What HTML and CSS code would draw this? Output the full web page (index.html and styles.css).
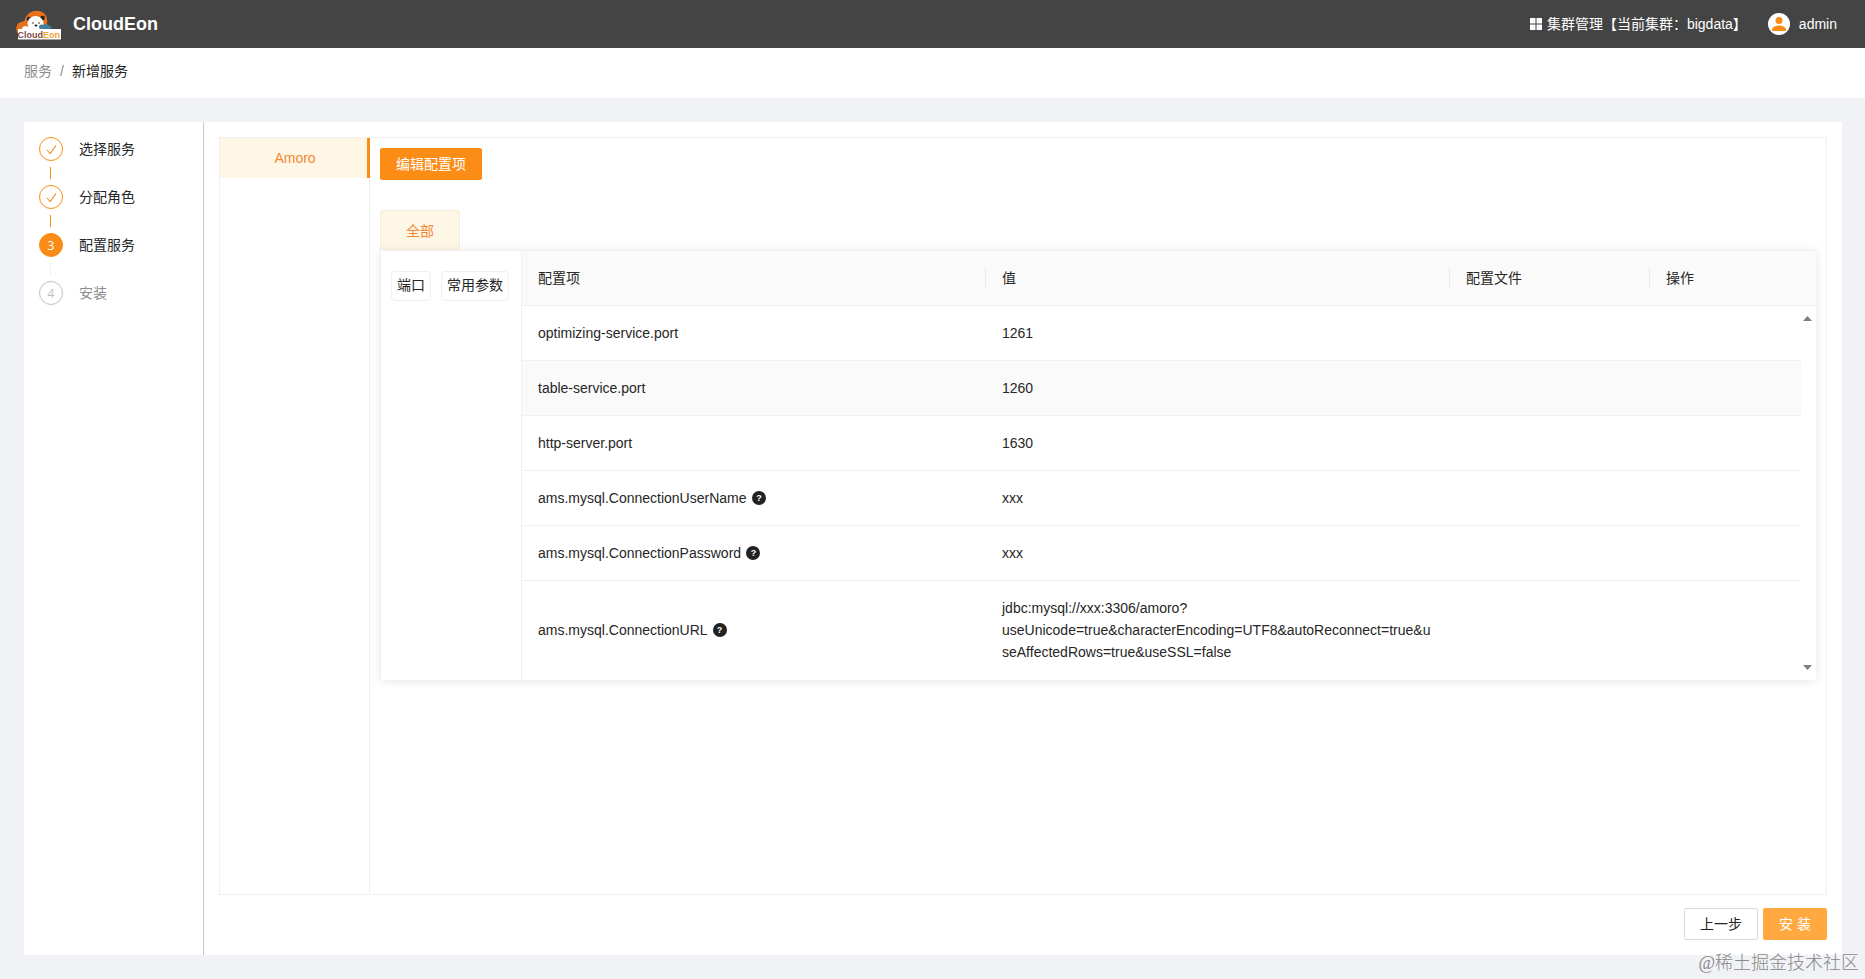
FILE: index.html
```
<!DOCTYPE html>
<html lang="zh-CN">
<head>
    <meta charset="UTF-8">
    <meta name="viewport" content="width=device-width, initial-scale=1.0">
    <title>CloudEon</title>
    <link rel="stylesheet" href="styles.css">
</head>
<body>

    <header class="header">
        <div class="brand">
            <svg class="logo" viewBox="0 0 46 30">
                <path d="M3 25C-1 21-1 14 5 12 8 11 9 11 9 9 12 1 20-1 26 2 30 4 32 8 31 14L29 20 8 25Z" fill="#e8701a"/>
                <circle cx="13" cy="9" r="2.3" fill="#222"/>
                <circle cx="26.500" cy="8" r="2.300" fill="#222"/>
                <ellipse cx="19.500" cy="13.500" rx="8" ry="7.500" fill="#fff"/>
                <path d="M6 19c0-3 4-4 6-2h14v4H6z" fill="#fff"/>
                <circle cx="17" cy="13" r=".8" fill="#222"/>
                <circle cx="23" cy="13" r=".8" fill="#222"/>
                <ellipse cx="20" cy="15.500" rx="1.500" ry="1" fill="#222"/>
                <path d="M23 17c0-3 3-3 5-2 2-2 5-1 5 1 3 0 3 2 1 3H25c-2 0-2-1-2-2z" fill="#3f7f9f"/>
                <rect x="2" y="19" width="43" height="10.500" fill="#fff"/>
                <text class="logo-text" x="1.500" y="28" textLength="42.500" lengthAdjust="spacingAndGlyphs"><tspan fill="#7d4a4a">Cloud</tspan><tspan fill="#f5a032">Eon</tspan></text>
            </svg>
            <span class="brand-name">CloudEon</span>
        </div>
        <div class="header-right">
            <svg class="grid-icon" viewBox="0 0 12 12"><path d="M0 0h5.500v5.500H0zM6.500 0H12v5.500H6.500zM0 6.500h5.500V12H0zM6.500 6.500H12V12H6.500z"/></svg>
            <span class="cluster">集群管理【当前集群：bigdata】</span>
            <svg class="avatar" viewBox="0 0 22 22">
                <circle cx="11" cy="11" r="11" fill="#fff"/>
                <circle cx="11" cy="7.500" r="3.500" fill="#fb8c16"/>
                <path d="M4 18v-1.500c0-2.800 4.500-4 7-4s7 1.200 7 4V18z" fill="#fb8c16"/>
            </svg>
            <span>admin</span>
        </div>
    </header>

    <nav class="breadcrumb">
        <span>服务</span>
        <span class="separator">/</span>
        <span class="current">新增服务</span>
    </nav>

    <main class="card">
        <aside class="steps">
            <div class="step">
                <span class="step-icon"><svg viewBox="0 0 12 12"><path d="M1 6.500 4.500 10.500 11 1.500"/></svg></span>
                <span>选择服务</span>
            </div>
            <div class="step-tail"></div>
            <div class="step">
                <span class="step-icon"><svg viewBox="0 0 12 12"><path d="M1 6.500 4.500 10.500 11 1.500"/></svg></span>
                <span>分配角色</span>
            </div>
            <div class="step-tail"></div>
            <div class="step">
                <span class="step-icon active">3</span>
                <span>配置服务</span>
            </div>
            <div class="step-tail wait"></div>
            <div class="step waiting">
                <span class="step-icon">4</span>
                <span>安装</span>
            </div>
        </aside>

        <section class="content">
            <div class="config-box">
                <div class="service-menu">
                    <div class="service-item">Amoro</div>
                </div>
                <div class="config">
                    <button class="btn primary">编辑配置项</button>
                    <div class="tab">全部</div>
                    <div class="panel">
                        <div class="tags">
                            <span class="tag">端口</span>
                            <span class="tag">常用参数</span>
                        </div>
                        <div class="table">
                            <div class="row head">
                                <div class="cell">配置项</div>
                                <div class="cell">值</div>
                                <div class="cell">配置文件</div>
                                <div class="cell">操作</div>
                            </div>
                            <div class="table-body">
                                <div class="rows">
                                    <div class="row">
                                        <div class="cell">optimizing-service.port</div>
                                        <div class="cell">1261</div>
                                    </div>
                                    <div class="row hover">
                                        <div class="cell">table-service.port</div>
                                        <div class="cell">1260</div>
                                    </div>
                                    <div class="row">
                                        <div class="cell">http-server.port</div>
                                        <div class="cell">1630</div>
                                    </div>
                                    <div class="row">
                                        <div class="cell">ams.mysql.ConnectionUserName <span class="help">?</span></div>
                                        <div class="cell">xxx</div>
                                    </div>
                                    <div class="row">
                                        <div class="cell">ams.mysql.ConnectionPassword <span class="help">?</span></div>
                                        <div class="cell">xxx</div>
                                    </div>
                                    <div class="row url">
                                        <div class="cell">ams.mysql.ConnectionURL <span class="help">?</span></div>
                                        <div class="cell"><p>jdbc:mysql://xxx:3306/amoro?<br>useUnicode=true&amp;characterEncoding=UTF8&amp;autoReconnect=true&amp;useAffectedRows=true&amp;useSSL=false</p></div>
                                    </div>
                                </div>
                                <div class="scrollbar">
                                    <svg viewBox="0 0 9 5"><path d="M0 5 4.500 0 9 5z"/></svg>
                                    <svg viewBox="0 0 9 5"><path d="M0 0h9L4.500 5z"/></svg>
                                </div>
                            </div>
                        </div>
                    </div>
                </div>
            </div>
            <div class="actions">
                <button class="btn">上一步</button>
                <button class="btn install">安 装</button>
            </div>
        </section>
    </main>

    <div class="watermark">@稀土掘金技术社区</div>

</body>
</html>
```

FILE: styles.css
```
* {
    box-sizing: border-box;
}

body {
    margin: 0;
    height: 979px;
    display: flex;
    flex-direction: column;
    overflow: hidden;
    background-color: #f0f2f5;
    color: #262626;
    font-family: "Liberation Sans", "Noto Sans CJK SC", sans-serif;
    font-size: 14px;
    line-height: 22px;
}

/* Header */
.header {
    height: 48px;
    flex: none;
    display: flex;
    align-items: center;
    justify-content: space-between;
    padding: 0 28px 0 16px;
    background-color: #444;
    color: #fff;
}

.brand,
.header-right {
    display: flex;
    align-items: center;
}

.logo {
    width: 46px;
    height: 30px;
    margin-top: 2px;
}

.logo-text {
    font-size: 9px;
    font-weight: bold;
}

.brand-name {
    margin-left: 11px;
    font-size: 18px;
    font-weight: bold;
}

.grid-icon {
    width: 12px;
    height: 12px;
    margin-right: 5px;
    fill: #fff;
}

.cluster {
    margin-right: 21px;
}

.avatar {
    width: 22px;
    height: 22px;
    margin-right: 9px;
}

.breadcrumb {
    height: 50px;
    flex: none;
    display: flex;
    padding: 12px 24px;
    background-color: #fff;
    color: #8c8c8c;
}

.separator {
    margin: 0 8px;
}

.current {
    color: #222;
}

/* Main card */
.card {
    flex: none;
    display: flex;
    width: 1818px;
    height: 833px;
    margin: 24px 0 0 24px;
    background-color: #fff;
}

.steps {
    width: 180px;
    padding: 15px;
    border-right: 1px solid #c8c8c8;
}

.step {
    height: 24px;
    display: flex;
    align-items: center;
    gap: 16px;
}

.step-icon {
    width: 24px;
    height: 24px;
    display: flex;
    align-items: center;
    justify-content: center;
    padding-top: 2px;
    border: 1px solid #fb8c16;
    border-radius: 50%;
    font-family: "Open Sans", sans-serif;
    font-size: 12px;
}

.step-icon svg {
    width: 11px;
    height: 11px;
    margin-bottom: 2px;
    fill: none;
    stroke: #fb8c16;
    stroke-width: 1.1;
}

.step-icon.active {
    background-color: #fb8c16;
    color: #fff;
}

.step-tail {
    width: 1px;
    height: 12px;
    margin: 6px 11px;
    background-color: #fb8c16;
}

.step-tail.wait {
    background-color: #f0f0f0;
}

.waiting {
    color: #8c8c8c;
}

.waiting .step-icon {
    border-color: #bfbfbf;
    color: #bfbfbf;
}

.content {
    flex: 1;
    padding: 15px;
}

.config-box {
    height: 758px;
    display: flex;
    border: 1px solid #f0f0f0;
}

.service-menu {
    width: 150px;
    border-right: 1px solid #f0f0f0;
}

.service-item {
    width: 150px;
    height: 40px;
    padding-left: 3px;
    border-right: 3px solid #fb8c16;
    background-color: #fff7e6;
    color: #f58634;
    line-height: 40px;
    text-align: center;
}

.config {
    flex: 1;
    padding: 10px;
}

/* Buttons */
.btn {
    height: 32px;
    padding: 0 15px;
    border: 1px solid #d9d9d9;
    border-radius: 2px;
    background-color: #fff;
    color: #222;
    font: inherit;
}

.btn.primary {
    display: block;
    border-color: #fb8c16;
    background-color: #fb8c16;
    color: #fff;
}

.btn.install {
    border-color: #ffa940;
    background-color: #ffa940;
    color: #fff;
}

.actions {
    display: flex;
    justify-content: flex-end;
    gap: 5px;
    margin-top: 13px;
}

.tab {
    width: 80px;
    height: 40px;
    margin-top: 30px;
    border: 1px solid #f5ecdc;
    border-bottom: 0;
    border-radius: 4px 4px 0 0;
    background-color: #fff7e6;
    color: #f58634;
    line-height: 40px;
    text-align: center;
}

.panel {
    width: 1436px;
    height: 430px;
    display: flex;
    border: 1px solid #f0f0f0;
    border-right: 0;
    border-bottom: 0;
    box-shadow: 0 1px 10px rgba(0, 0, 0, 0.1);
}

.tags {
    width: 140px;
    display: flex;
    align-items: flex-start;
    gap: 10px;
    padding: 20px 10px;
}

.tag {
    height: 30px;
    padding: 0 5px;
    border: 1px solid #f0f0f0;
    border-radius: 4px;
    line-height: 26px;
    white-space: nowrap;
}

/* Config table */
.table {
    flex: 1;
    border-left: 1px solid #f0f0f0;
}

.row {
    min-height: 55px;
    display: grid;
    grid-template-columns: 464px 464px 200px 1fr;
    align-items: center;
    border-bottom: 1px solid #f0f0f0;
}

.row.hover,
.row.head {
    background-color: #fafafa;
}

.row.url {
    height: 99px;
    border-bottom-color: #fff;
}

.cell {
    padding: 0 16px;
}

.cell p {
    margin: 0;
    word-break: break-all;
}

.head .cell {
    border-right: 1px solid #ececec;
}

.head .cell:last-child {
    border-right: 0;
}

.help {
    display: inline-block;
    width: 14px;
    height: 14px;
    margin-left: 1.5px;
    border-radius: 50%;
    background-color: #222;
    color: #fff;
    font-size: 9px;
    font-weight: bold;
    line-height: 14px;
    text-align: center;
    vertical-align: 2px;
}

.table-body {
    display: flex;
}

.rows {
    flex: 1;
}

.scrollbar {
    width: 15px;
    display: flex;
    flex-direction: column;
    align-items: center;
    justify-content: space-between;
    padding: 10px 2px 10px 0;
}

.scrollbar svg {
    width: 9px;
    height: 5px;
    fill: #7f7f7f;
}

.watermark {
    position: absolute;
    right: 6px;
    bottom: 4px;
    color: #888;
    font-family: "Liberation Serif", "Noto Sans CJK SC", serif;
    font-size: 18px;
    font-weight: 300;
    line-height: 24px;
}
```
